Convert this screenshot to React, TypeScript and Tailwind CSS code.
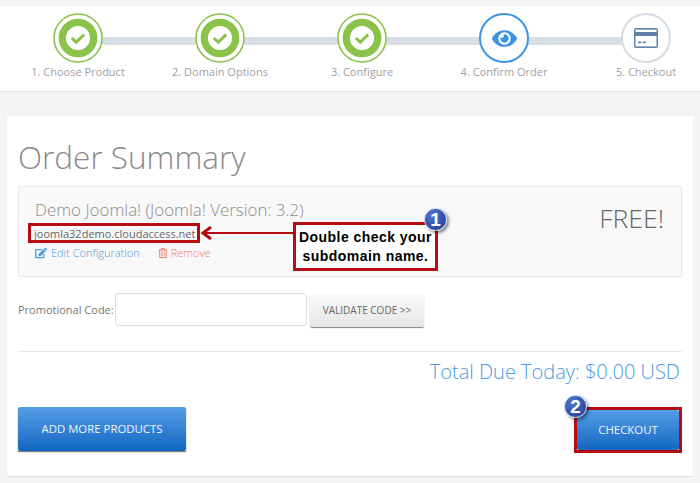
import { FaEdit, FaEye, FaRegTrashAlt } from "react-icons/fa";

function DoneIcon() {
  return (
    <svg width="50" height="50" viewBox="0 0 50 50" className="block">
      <circle cx="25" cy="25" r="24" fill="#fff" stroke="#8bc34a" strokeWidth="1.6" />
      <circle cx="25" cy="25" r="15.7" fill="#fff" stroke="#8bc34a" strokeWidth="7.3" />
      <path d="M18.8 25l4.4 4.2 8-7.6" fill="none" stroke="#8bc34a" strokeWidth="3" />
    </svg>
  );
}

function EyeIcon() {
  return (
    <div className="flex h-[50px] w-[50px] items-center justify-center rounded-full border-2 border-[#3d94e6] bg-white">
      <FaEye className="text-[25px] text-[#3d94e6]" />
    </div>
  );
}

function CardIcon() {
  return (
    <div className="flex h-[50px] w-[50px] items-center justify-center rounded-full border-2 border-[#d5dbe3] bg-white">
      <svg width="24" height="20" viewBox="0 0 24 20">
        <rect width="24" height="20" rx="2" fill="#5f83a8" />
        <rect x="1.5" y="1.6" width="21" height="2.4" fill="#fff" />
        <rect x="1.5" y="8" width="21" height="10.4" fill="#fff" />
        <rect x="4" y="13.6" width="3.4" height="1.6" fill="#5f83a8" />
        <rect x="8.6" y="13.6" width="3.4" height="1.6" fill="#5f83a8" />
      </svg>
    </div>
  );
}

const steps = [
  { label: "1. Choose Product", icon: <DoneIcon />, line: true },
  { label: "2. Domain Options", icon: <DoneIcon />, line: true },
  { label: "3. Configure", icon: <DoneIcon />, line: true },
  { label: "4. Confirm Order", icon: <EyeIcon />, line: true },
  { label: "5. Checkout", icon: <CardIcon />, line: false },
];

function Badge({ n }: { n: number }) {
  return (
    <span className="flex h-[23px] w-[23px] items-center justify-center rounded-full border border-[#c9d3ea] bg-[radial-gradient(circle_at_35%_30%,#4f76c9,#1d3a8f)] font-['Liberation_Sans',sans-serif] text-[19px] leading-none font-bold text-white shadow-[2px_2px_3px_rgba(0,0,0,0.45)]">
      {n}
    </span>
  );
}

const blueBtn =
  "flex h-full w-full items-center justify-center rounded-[2px] bg-gradient-to-b from-[#559ee6] to-[#0d66c2] text-[11.4px] font-normal text-[#eef5fc]";

export default function App() {
  return (
    <div className="h-[483px] w-[700px] overflow-hidden bg-[#f4f4f4] pt-[6px] font-['Open_Sans',sans-serif]">
      <div className="grid h-[86px] grid-cols-[repeat(5,142px)] border-b border-[#e6e6e6] bg-white px-[7px] pt-[7px]">
        {steps.map((s) => (
          <div key={s.label} className="relative flex flex-col items-center">
            {s.line && <div className="absolute top-[24px] left-1/2 h-2 w-full bg-[#d8dee6]" />}
            <div className="relative">{s.icon}</div>
            <span className="mt-[1px] text-[11px] leading-4 whitespace-nowrap text-[#a0a0a0]">{s.label}</span>
          </div>
        ))}
      </div>

      <div className="relative mx-[7px] mt-[24px] h-[360px] bg-white px-[11px] pt-[20px] shadow-[0_1px_1px_rgba(0,0,0,0.08)]">
        <h1 className="text-[31.5px] leading-[42px] font-light text-[#8a8a8a]">Order Summary</h1>

        <div className="relative mt-[8px] flex h-[91px] justify-between border border-[#e8e8e8] bg-[#f8f8f8] pt-[13px] pr-[17px] pl-[16px]">
          <div>
            <div className="text-[16.9px] leading-5 font-light text-[#8c8c8c]">Demo Joomla! (Joomla! Version: 3.2)</div>
            <div className="mt-[6px] -ml-px text-[11px] leading-4 text-[#666]">joomla32demo.cloudaccess.net</div>
            <div className="mt-[3px] flex items-center gap-[18px] text-[11px] leading-4 font-light">
              <span className="flex items-center gap-[4px] text-[#4b9ae4]">
                <FaEdit className="text-[12px]" /> Edit Configuration
              </span>
              <span className="flex items-center gap-[3px] text-[#ee7c6b]">
                <FaRegTrashAlt className="text-[10px]" /> Remove
              </span>
            </div>
          </div>
          <div className="pt-[2px] text-[26.5px] leading-8 font-light text-[#666]">FREE!</div>

          {/* annotation: red box around the domain + arrow + callout */}
          <div className="absolute top-[36px] left-[9px] h-[20px] w-[172px] border-[3px] border-[#b50d14]" />
          <svg className="absolute top-[38px] left-[181px]" width="95" height="16" viewBox="0 0 95 16">
            <path d="M2 8H95" stroke="#b50d14" strokeWidth="2" />
            <path d="M11 2L3 8l8 6" fill="none" stroke="#b50d14" strokeWidth="3" />
          </svg>
          <div className="absolute top-[35px] left-[274px] flex h-[49px] w-[145px] items-center justify-center border-[3px] border-[#b50d14] bg-white text-center font-['Liberation_Sans',sans-serif] text-[14px] leading-[19px] font-bold tracking-[0.45px] text-black">
            Double check your
            <br />
            subdomain name.
          </div>
          <div className="absolute top-[21px] left-[405px]">
            <Badge n={1} />
          </div>
        </div>

        <div className="mt-[16px] flex items-start">
          <span className="w-[97px] self-center text-[11px] whitespace-nowrap text-[#777]">Promotional Code:</span>
          <div className="h-[33px] w-[192px] rounded-[3px] border border-[#ddd] bg-white" />
          <button className="mt-px ml-[3px] h-[33px] w-[114px] rounded-[2px] bg-gradient-to-b from-[#fafafa] to-[#e6e6e6] text-[10px] text-[#666] shadow-[0_1px_1px_rgba(0,0,0,0.5)]">
            VALIDATE CODE &gt;&gt;
          </button>
        </div>

        <div className="mt-[24px] border-t border-[#e8e8e8]" />
        <div className="mt-[6px] pr-[2px] text-right text-[20px] leading-7 font-light text-[#4b9ae4]">Total Due Today: $0.00 USD</div>

        <div className="mt-[21px] flex items-start justify-between">
          <button className="h-[44px] w-[168px] shadow-[0_1px_1px_rgba(0,0,0,0.5)]">
            <span className={blueBtn}>ADD MORE PRODUCTS</span>
          </button>
          <div className="relative">
            <button className="block h-[46px] w-[108px] border-[3px] border-[#b50d14]">
              <span className={blueBtn}>CHECKOUT</span>
            </button>
            <div className="absolute -top-[12px] -left-[10px]">
              <Badge n={2} />
            </div>
          </div>
        </div>
      </div>
    </div>
  );
}
